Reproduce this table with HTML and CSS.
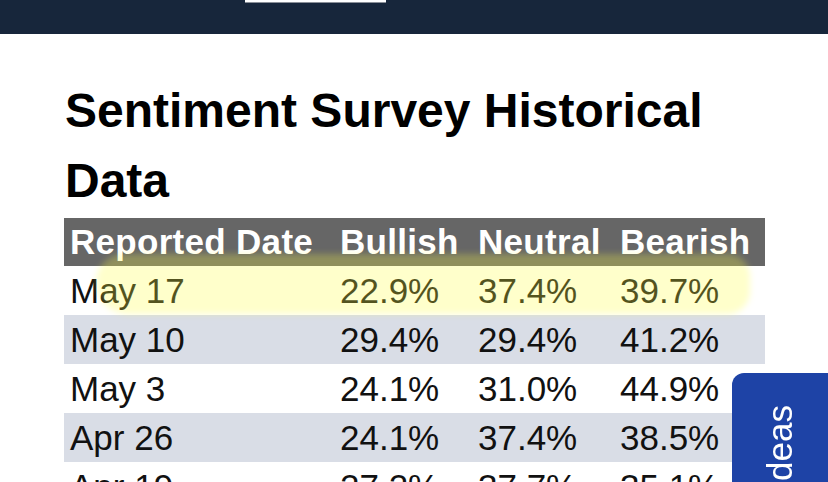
FILE: index.html
```html
<!DOCTYPE html>
<html lang="en">
<head>
<meta charset="utf-8">
<title>Sentiment Survey Historical Data</title>
<link rel="stylesheet" href="styles.css">
</head>
<body>
<header class="topbar">
  <div class="search-edge"></div>
</header>
<main class="content">
  <h1 class="title">Sentiment Survey Historical Data</h1>
  <div class="survey-table">
    <div class="row head">
      <div class="cell">Reported Date</div>
      <div class="cell">Bullish</div>
      <div class="cell">Neutral</div>
      <div class="cell">Bearish</div>
    </div>
    <div class="row">
      <div class="cell">May 17</div>
      <div class="cell">22.9%</div>
      <div class="cell">37.4%</div>
      <div class="cell">39.7%</div>
    </div>
    <div class="row alt">
      <div class="cell">May 10</div>
      <div class="cell">29.4%</div>
      <div class="cell">29.4%</div>
      <div class="cell">41.2%</div>
    </div>
    <div class="row">
      <div class="cell">May 3</div>
      <div class="cell">24.1%</div>
      <div class="cell">31.0%</div>
      <div class="cell">44.9%</div>
    </div>
    <div class="row alt">
      <div class="cell">Apr 26</div>
      <div class="cell">24.1%</div>
      <div class="cell">37.4%</div>
      <div class="cell">38.5%</div>
    </div>
    <div class="row">
      <div class="cell">Apr 19</div>
      <div class="cell">27.2%</div>
      <div class="cell">37.7%</div>
      <div class="cell">35.1%</div>
    </div>
  </div>
  <div class="highlight"></div>
</main>
<a class="ideas-tab" href="#"><span class="ideas-label">Ideas</span></a>
</body>
</html>
```
FILE: styles.css
```css
html, body {
  margin: 0;
  padding: 0;
  height: 482px;
  overflow: hidden;
  background: #ffffff;
  font-family: "Liberation Sans", Arial, sans-serif;
  color: #111111;
}

.topbar {
  height: 34px;
  background: #17263b;
  display: flex;
  align-items: flex-start;
}

.search-edge {
  margin-left: 245px;
  width: 141px;
  height: 2px;
  background: #ffffff;
  border-bottom: 1px solid #8a8f98;
}

.content {
  position: relative;
  padding: 42px 0 0 64px;
}

.title {
  margin: 0 0 2px 0;
  max-width: 680px;
  font-size: 48px;
  line-height: 70px;
  font-weight: 700;
  color: #000000;
  padding-left: 1px;
}

.survey-table {
  width: 701px;
  display: flex;
  flex-direction: column;
}

.row {
  display: grid;
  grid-template-columns: 270px 138px 142px 151px;
  height: 49px;
  font-size: 35px;
  line-height: 49px;
  background: #ffffff;
}

.row.alt {
  background: #d9dde6;
}

.row.head {
  height: 48px;
  line-height: 48px;
  background: #666666;
  color: #ffffff;
  font-weight: 700;
  letter-spacing: 0.3px;
}

.cell {
  padding-left: 6px;
  white-space: nowrap;
}

.highlight {
  position: absolute;
  left: 96px;
  top: 220px;
  width: 654px;
  height: 60px;
  border-radius: 30px 24px 24px 34px;
  background: rgba(255, 255, 70, 0.28);
  filter: blur(3px);
  pointer-events: none;
}

.ideas-tab {
  position: absolute;
  left: 732px;
  top: 373px;
  width: 110px;
  height: 160px;
  background: #1e43a6;
  border-radius: 12px 0 0 0;
  text-decoration: none;
  display: flex;
  align-items: flex-start;
  padding: 32px 0 0 30px;
  box-sizing: border-box;
}

.ideas-label {
  writing-mode: vertical-rl;
  transform: rotate(180deg);
  color: #ffffff;
  font-size: 35px;
  line-height: 35px;
}
```
